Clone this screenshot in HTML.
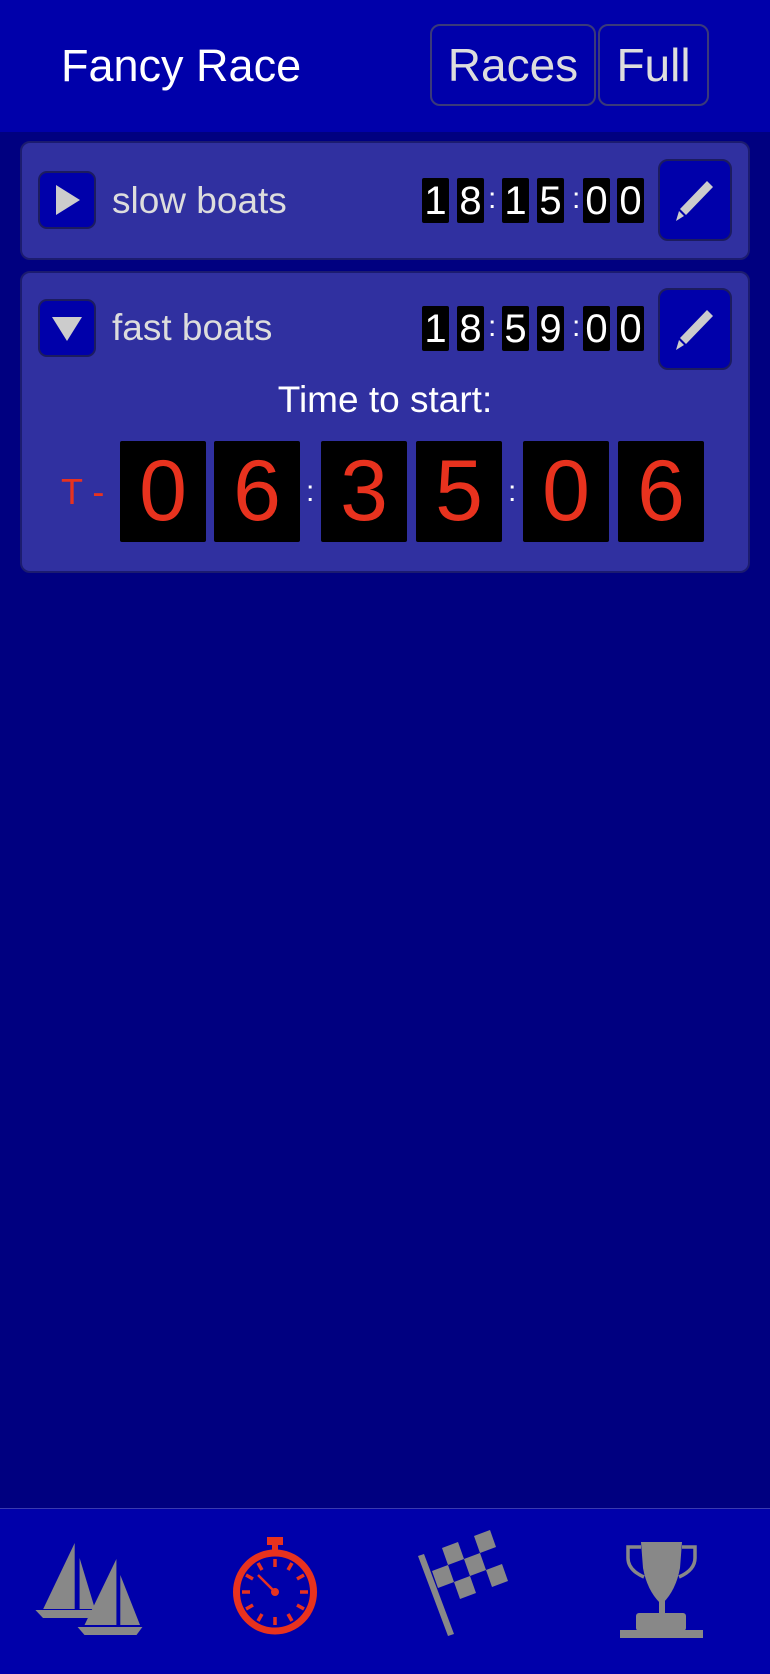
<!DOCTYPE html>
<html><head><meta charset="utf-8"><style>
*{margin:0;padding:0;box-sizing:border-box}
body{width:770px;height:1674px;background:#000080;position:relative;overflow:hidden;font-family:"Liberation Sans",Arial,sans-serif}
.abs{position:absolute}
#hdr{left:0;top:0;width:770px;height:132px;background:#0000aa}
.title{left:61px;top:38px;font-size:45px;color:#fff;line-height:56px}
.hbtn{background:#0000aa;border:2px solid #3a3a7a;border-radius:10px;color:#ddd;font-size:46px;text-align:center;line-height:78px;height:82px;top:24px}
.card{left:20px;width:730px;background:#3030a0;border:2px solid #1c1c70;border-radius:10px}
.sbtn{width:58px;height:58px;background:#0000aa;border:2px solid #1c1c60;border-radius:9px}
.ebtn{width:74px;height:82px;background:#0000aa;border:2px solid #1c1c60;border-radius:10px;left:658px}
.name{font-size:37px;color:#ddd;left:112px;line-height:44px}
.d{background:#000;color:#fff;width:27px;height:45px;border-radius:2px;font-size:40px;line-height:46px;text-align:center}
.c{color:#fff;font-size:30px;line-height:45px}
.bd{background:#000;color:#e8321e;width:86px;height:101px;border-radius:2px;font-size:86px;line-height:101px;text-align:center}
.bc{color:#fff;font-size:30px;line-height:101px}
</style></head><body>
<div id="hdr" class="abs"></div>
<div class="abs title">Fancy Race</div>
<div class="abs hbtn" style="left:430px;width:166px">Races</div>
<div class="abs hbtn" style="left:598px;width:111px">Full</div>

<div class="abs card" style="top:141px;height:119px"></div>
<div class="abs sbtn" style="left:38px;top:171px"><svg width="54" height="54" viewBox="0 0 54 54" class="abs" style="left:0;top:0"><polygon points="16,12 40,27 16,42" fill="#ccc"/></svg></div>
<div class="abs name" style="top:179px">slow boats</div>
<div class="abs d" style="left:422px;top:178px">1</div>
<div class="abs d" style="left:457px;top:178px">8</div>
<div class="abs c" style="left:488px;top:176px">:</div>
<div class="abs d" style="left:502px;top:178px">1</div>
<div class="abs d" style="left:537px;top:178px">5</div>
<div class="abs c" style="left:572px;top:176px">:</div>
<div class="abs d" style="left:583px;top:178px">0</div>
<div class="abs d" style="left:617px;top:178px">0</div>
<div class="abs ebtn" style="top:159px"><svg width="70" height="78" viewBox="0 0 70 78" class="abs" style="left:0;top:0"><path d="M47 20 L53 26 L26 54 L20 48 Z" fill="#ccc"/><path d="M19 50 L24 55 L16 60 Z" fill="#ccc"/></svg></div>

<div class="abs card" style="top:271px;height:302px"></div>
<div class="abs sbtn" style="left:38px;top:299px"><svg width="54" height="54" viewBox="0 0 54 54" class="abs" style="left:0;top:0"><polygon points="12,16 42,16 27,40" fill="#ccc"/></svg></div>
<div class="abs name" style="top:306px">fast boats</div>
<div class="abs d" style="left:422px;top:306px">1</div>
<div class="abs d" style="left:457px;top:306px">8</div>
<div class="abs c" style="left:488px;top:304px">:</div>
<div class="abs d" style="left:502px;top:306px">5</div>
<div class="abs d" style="left:537px;top:306px">9</div>
<div class="abs c" style="left:572px;top:304px">:</div>
<div class="abs d" style="left:583px;top:306px">0</div>
<div class="abs d" style="left:617px;top:306px">0</div>
<div class="abs ebtn" style="top:288px"><svg width="70" height="78" viewBox="0 0 70 78" class="abs" style="left:0;top:0"><path d="M47 20 L53 26 L26 54 L20 48 Z" fill="#ccc"/><path d="M19 50 L24 55 L16 60 Z" fill="#ccc"/></svg></div>

<div class="abs" style="left:0;width:770px;top:378px;text-align:center;color:#fff;font-size:37px;line-height:44px">Time to start:</div>
<div class="abs" style="left:61px;top:470px;color:#e8321e;font-size:36px;line-height:44px">T -</div>
<div class="abs bd" style="left:120px;top:441px">0</div>
<div class="abs bd" style="left:214px;top:441px">6</div>
<div class="abs bc" style="left:306px;top:441px">:</div>
<div class="abs bd" style="left:321px;top:441px">3</div>
<div class="abs bd" style="left:416px;top:441px">5</div>
<div class="abs bc" style="left:508px;top:441px">:</div>
<div class="abs bd" style="left:523px;top:441px">0</div>
<div class="abs bd" style="left:618px;top:441px">6</div>

<div class="abs" style="left:0;top:1508px;width:770px;height:166px;background:#0000aa;border-top:1px solid #3a3ab0"></div>
<svg class="abs" style="left:0;top:0" width="770" height="1674" viewBox="0 0 770 1674">
<g fill="#888">
<polygon points="74.7,1543 43.2,1609 74.7,1609"/>
<polygon points="79.6,1558 79.6,1609 95,1609"/>
<polygon points="35.4,1610 93,1610 88,1618 43,1618"/>
<polygon points="116.4,1559 84.5,1625 116.4,1625"/>
<polygon points="120.3,1575 120.3,1625 140,1625"/>
<polygon points="77.6,1627 142.4,1627 136.5,1635 84.5,1635"/>
</g>
<g fill="#e8321e" stroke="none">
<rect x="267" y="1537" width="16" height="8"/>
<rect x="272" y="1544" width="6" height="9"/>
<ellipse cx="275" cy="1592" rx="38.5" ry="39" fill="none" stroke="#e8321e" stroke-width="7"/>
<g stroke="#e8321e" stroke-width="3.5">
<line x1="275" y1="1559" x2="275" y2="1567"/><line x1="275" y1="1617" x2="275" y2="1625"/>
<line x1="242" y1="1592" x2="250" y2="1592"/><line x1="300" y1="1592" x2="308" y2="1592"/>
<line x1="258" y1="1563" x2="262" y2="1570"/><line x1="292" y1="1563" x2="288" y2="1570"/>
<line x1="258" y1="1621" x2="262" y2="1614"/><line x1="292" y1="1621" x2="288" y2="1614"/>
<line x1="246" y1="1575" x2="253" y2="1579"/><line x1="304" y1="1575" x2="297" y2="1579"/>
<line x1="246" y1="1609" x2="253" y2="1605"/><line x1="304" y1="1609" x2="297" y2="1605"/>
<line x1="258" y1="1575" x2="275" y2="1592" stroke-width="2.5"/>
</g>
<circle cx="275" cy="1592" r="4"/>
</g>
<g fill="#888">
<polygon points="418,1556 424,1554 454,1634 448,1636"/>
<g transform="matrix(16,-6,6,17,426,1554)">
<rect x="1" y="0" width="1" height="1"/><rect x="3" y="0" width="1" height="1"/>
<rect x="0" y="1" width="1" height="1"/><rect x="2" y="1" width="1" height="1"/>
<rect x="1" y="2" width="1" height="1"/><rect x="3" y="2" width="1" height="1"/>
</g>
</g>
<g fill="#888">
<path d="M641 1542 H682 L680 1568 Q676 1590 663 1603 H660 Q647 1590 643 1568 Z"/>
<rect x="659" y="1600" width="6" height="14"/>
<path d="M641 1547 H628 V1558 Q628 1570 644 1577" fill="none" stroke="#888" stroke-width="3.5"/>
<path d="M682 1547 H695 V1558 Q695 1570 679 1577" fill="none" stroke="#888" stroke-width="3.5"/>
<rect x="636" y="1613" width="50" height="18" rx="3"/>
<rect x="620" y="1630" width="83" height="8"/>
</g>
</svg>
</body></html>
